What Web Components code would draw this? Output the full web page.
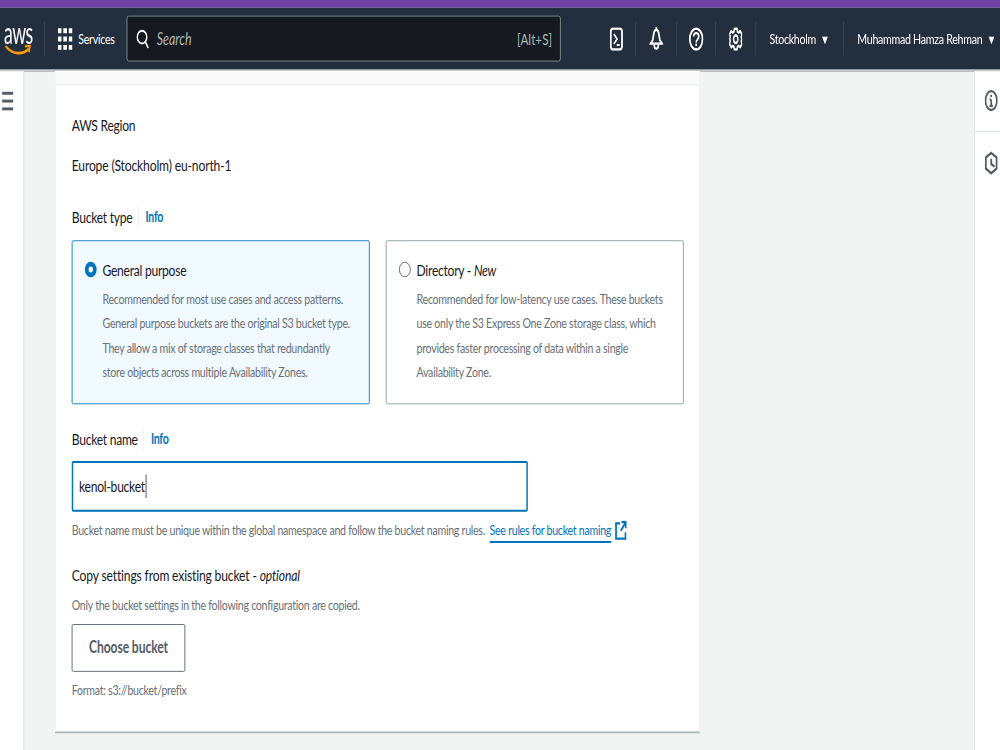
<!DOCTYPE html>
<html>
<head>
<meta charset="utf-8">
<title>Create bucket</title>
<style>
  html, body { margin:0; padding:0; height:100%; overflow:hidden; background:#f2f3f3; }
</style>
</head>
<body>
<s3-console>
  <top-nav slot="nav"></top-nav>
  <side-rail slot="left"></side-rail>
  <general-config slot="main"></general-config>
  <tools-rail slot="right"></tools-rail>
</s3-console>

<script>
// the reference is a 1366x768 page squeezed into 1000x750, so lay out at
// the real size and squeeze the stage once
class S3Console extends HTMLElement {
  constructor() {
	super();
	this.attachShadow({ mode: "open" }).innerHTML = `
	  <style>
		:host {
		  display:block; width:1000px; height:750px; overflow:hidden;
		  font:14.5px/20px Lato, "Noto Sans", sans-serif; color:#16191f; background:#f2f3f3;
		  --ls-s:-.37px; --ls-l:-.35px;
		}
		.stage { width:1366px; height:768px; overflow:hidden; transform-origin:0 0; transform:scale(.73206,.97656); }
		.strip { height:8px; background:#6f42a5; }
		.body { display:flex; height:695px; }
		.mid { flex:1; padding-left:42px; padding-right:375px; min-width:0; }
	  </style>
	  <div class="stage">
		<div class="strip"></div>
		<slot name="nav"></slot>
		<div class="body">
		  <slot name="left"></slot>
		  <div class="mid"><slot name="main"></slot></div>
		  <slot name="right"></slot>
		</div>
	  </div>`;
  }
}

class TopNav extends HTMLElement {
  constructor() {
	super();
	this.attachShadow({ mode: "open" }).innerHTML = `
	  <style>
		:host {
		  display:flex; align-items:center; height:65px; box-sizing:border-box;
		  background:#232f3e; color:#fff; border-bottom:2px solid #c9cdd1;
		  font-size:14.5px; letter-spacing:var(--ls-s);
		}
		.logo { width:36px; margin-left:7px; display:flex; flex-direction:column; align-items:center; flex:none; }
		.logo b { display:block; font:400 31px/22px Lato, sans-serif; letter-spacing:-1px; transform:scaleX(.78); }
		.logo svg { display:block; margin-top:2px; }
		.sep { width:1px; height:35px; background:#3d4856; flex:none; }
		.services { display:flex; align-items:center; gap:8px; width:77px; margin-left:18px; flex:none; white-space:nowrap; }
		.services svg { flex:none; }
		.search {
		  width:593px; height:47px; box-sizing:border-box; margin-left:17px; flex:none;
		  display:flex; align-items:center; padding:0 11px 0 12px;
		  background:#16191f; border:1px solid #879596; border-radius:3px; color:#aab7b8;
		  letter-spacing:0;
		}
		.search svg { flex:none; }
		.search em { margin-left:10px; font-size:17px; flex:1; }
		.search span { font-size:16px; }
		.ico { display:flex; justify-content:center; flex:none; }
		.region { width:101px; padding-left:18px; flex:none; white-space:nowrap; }
		.user { padding-left:18px; white-space:nowrap; flex:none; }
		.caret { font-size:13px; margin-left:6px; letter-spacing:0; }
	  </style>
	  <div class="logo">
		<b>aws</b>
		<svg width="36" height="11" viewBox="0 0 36 11"><path d="M1.500 2c8 7.500 22 8.500 30 2.500" fill="none" stroke="#f90" stroke-width="2.800" stroke-linecap="round"/><path d="M27 1.500l7-.5-1.500 6.500" fill="none" stroke="#f90" stroke-width="2.200"/></svg>
	  </div>
	  <div class="sep" style="margin-left:17px"></div>
	  <div class="services">
		<svg width="20" height="24" viewBox="0 0 20 24" fill="#fff"><path d="M0 1h5v5H0zM7.500 1h5v5h-5zM15 1h5v5h-5zM0 9.500h5v5H0zM7.500 9.500h5v5h-5zM15 9.500h5v5h-5zM0 18h5v5H0zM7.500 18h5v5h-5zM15 18h5v5h-5z"/></svg>
		<span>Services</span>
	  </div>
	  <div class="search">
		<svg width="18" height="20" viewBox="0 0 18 20" fill="none" stroke="#fff" stroke-width="2"><circle cx="8" cy="8" r="6.500"/><path d="M12.500 13l4 6"/></svg>
		<em>Search</em>
		<span>[Alt+S]</span>
	  </div>
	  <div class="ico" style="margin-left:50px;width:52px"><svg width="18" height="24" viewBox="0 0 18 24" fill="none" stroke="#fff" stroke-width="2.500"><rect x="1.300" y="1.300" width="15.400" height="21.400" rx="3"/><path d="M5.500 7l4.500 5-4.500 5M9.500 18h4" stroke-width="2"/></svg></div>
	  <div class="sep"></div>
	  <div class="ico" style="width:55px"><svg width="19" height="26" viewBox="0 0 20 27" fill="none" stroke="#fff" stroke-width="2.500"><path d="M10 .5v3M10 3.500c-2.200 0-3.200 1.500-3.600 4L5 14c-.5 2-2 3-3.500 4.500h17C17 17 15.500 16 15 14l-1.400-6.500c-.4-2.500-1.400-4-3.600-4z"/><path d="M7 19c0 6.500 6 6.500 6 0"/></svg></div>
	  <div class="sep"></div>
	  <div class="ico" style="width:52px"><svg width="20" height="24" viewBox="0 0 20 24" fill="none" stroke="#fff" stroke-width="2.500"><ellipse cx="10" cy="12" rx="8.700" ry="10.700"/><path d="M6.500 9.500c0-5 7-5 7 0 0 3-3.500 3-3.500 6" stroke-width="2.200"/><path d="M10 16.500v2.500" stroke-width="2.200"/></svg></div>
	  <div class="sep"></div>
	  <div class="ico" style="width:54px"><svg width="18" height="24" viewBox="0 0 24 24" preserveAspectRatio="none" fill="none" stroke="#fff" stroke-width="2.600"><path d="M9.600 1.500h4.800l.7 2.800 2.500 1 2.500-1.500 3.400 3.400-1.500 2.500 1 2.300-1 2.500 1.500 2.500-3.400 3.400-2.500-1.500-2.500 1-.7 2.800H9.600l-.7-2.800-2.500-1-2.500 1.500L.5 16.700 2 14.200l-1-2.200 1-2.500L.5 7.200l3.400-3.400 2.500 1.500 2.500-1z"/><circle cx="12" cy="12" r="4"/></svg></div>
	  <div class="sep"></div>
	  <div class="region">Stockholm<span class="caret">▼</span></div>
	  <div class="sep"></div>
	  <div class="user">Muhammad Hamza Rehman<span class="caret">▼</span></div>`;
  }
}

class SideRail extends HTMLElement {
  constructor() {
	super();
	this.attachShadow({ mode: "open" }).innerHTML = `
	  <style>
		:host {
		  display:block; width:33px; flex:none; box-sizing:border-box;
		  background:#fff; border-right:1px solid #d5dbdb; padding:21px 0 0 3px;
		}
		i { display:block; width:15px; height:3px; background:#545b64; margin-bottom:5px; }
	  </style>
	  <i></i><i></i><i></i>`;
  }
}

class ToolsRail extends HTMLElement {
  constructor() {
	super();
	this.attachShadow({ mode: "open" }).innerHTML = `
	  <style>
		:host {
		  display:block; width:35px; flex:none; box-sizing:border-box;
		  background:#fff; border-left:1px solid #d5dbdb;
		}
		.top { height:62px; box-sizing:border-box; border-bottom:1px solid #d5dbdb; padding:18px 0 0 13px; }
		.low { padding:19px 0 0 13px; }
		svg { display:block; }
	  </style>
	  <div class="top">
		<svg width="18" height="24" viewBox="0 0 20 24" fill="none" stroke="#545b64" stroke-width="2.600"><ellipse cx="10" cy="12" rx="8.700" ry="10.700"/><path d="M10 11v7M7.500 18h5M7.500 11H10M10 5.500V8" stroke-width="2.600"/></svg>
	  </div>
	  <div class="low">
		<svg width="18" height="26" viewBox="0 0 20 26" fill="none" stroke="#545b64" stroke-width="2.800"><path d="M10 1.500l8.200 5.200v12.600L10 24.500l-8.200-5.200V6.700z"/><path d="M10 8v6l5 3"/></svg>
	  </div>`;
  }
}

class FieldLabel extends HTMLElement {
  constructor() {
	super();
	this.attachShadow({ mode: "open" }).innerHTML = `
	  <style>
		:host { display:flex; align-items:center; font-size:16.5px; line-height:22px; color:#16191f; letter-spacing:var(--ls-l); }
		a { margin-left:8px; padding-left:9px; border-left:1px solid #eaeded; color:#0073bb; font-size:14.5px; font-weight:700; text-decoration:none; letter-spacing:var(--ls-s); }
	  </style>
	  <slot></slot><a href="#">Info</a>`;
  }
}

class BucketTile extends HTMLElement {
  constructor() {
	super();
	this.attachShadow({ mode: "open" }).innerHTML = `
	  <style>
		:host {
		  display:flex; gap:8px; box-sizing:border-box; width:407px; height:168px; flex:none;
		  padding:18px 10px 0 17px; border:1px solid #879596; border-radius:2px; background:#fff;
		}
		:host([selected]) { background:#f1faff; border-color:#0073bb; }
		.radio {
		  width:16px; height:16px; box-sizing:border-box; margin-top:3px; flex:none;
		  border:1px solid #545b64; border-radius:50%; background:#fff;
		}
		:host([selected]) .radio { border:5px solid #0073bb; }
		.title { font-size:16.5px; line-height:24px; letter-spacing:var(--ls-l); }
		.desc { font-size:14.5px; line-height:25px; color:#687078; white-space:nowrap; margin-top:4px; letter-spacing:var(--ls-s); }
	  </style>
	  <div class="radio"></div>
	  <div>
		<div class="title"><slot name="title"></slot></div>
		<div class="desc"><slot></slot></div>
	  </div>`;
  }
}

class GeneralConfig extends HTMLElement {
  constructor() {
	super();
	this.attachShadow({ mode: "open" }).innerHTML = `
	  <style>
		:host {
		  display:block; height:678px; box-sizing:border-box; position:relative;
		  background:#fff; border:1px solid #eaeded; border-top:0; border-bottom:2px solid #aab7b8;
		}
		.stub { height:13px; background:#fafafa; border-bottom:1px solid #eaeded; }
		.pad { padding:30px 0 0 22px; }
		.plain { font-size:16.5px; line-height:22px; letter-spacing:var(--ls-l); }
		.wide { letter-spacing:-.2px; }
		.tiles { display:flex; gap:22px; width:836px; margin-top:13px; }
		.input {
		  width:623px; height:52px; box-sizing:border-box; margin-top:11px;
		  display:flex; align-items:center; padding:0 8px;
		  border:2px solid #0073bb; border-radius:2px; font-size:16.5px; letter-spacing:var(--ls-l);
		}
		.input i { display:block; width:1px; height:24px; background:#16191f; margin-left:1px; }
		.help { font-size:14.5px; line-height:20px; color:#687078; white-space:nowrap; letter-spacing:var(--ls-s); }
		.help a { color:#0073bb; text-decoration:none; border-bottom:2px solid #0073bb; padding-bottom:3px; margin-left:3px; }
		.help svg { vertical-align:-5px; margin-left:5px; }
		button {
		  display:block; width:155px; height:49px; box-sizing:border-box; margin-top:9px; padding:0 0 2px;
		  background:#fff; border:1px solid #545b64; border-radius:2px; color:#545b64;
		  font:700 16.5px/20px Lato, sans-serif; letter-spacing:-.1px;
		}
		em { font-style:italic; }
	  </style>
	  <div class="stub"></div>
	  <div class="pad">
		<div class="plain">AWS Region</div>
		<div class="plain wide" style="margin-top:19px">Europe (Stockholm) eu-north-1</div>
		<field-label style="margin-top:31px">Bucket type</field-label>
		<div class="tiles">
		  <bucket-tile selected>
			<span slot="title">General purpose</span>
			Recommended for most use cases and access patterns.<br>
			General purpose buckets are the original S3 bucket type.<br>
			They allow a mix of storage classes that redundantly<br>
			store objects across multiple Availability Zones.
		  </bucket-tile>
		  <bucket-tile>
			<span slot="title">Directory - <em>New</em></span>
			Recommended for low-latency use cases. These buckets<br>
			use only the S3 Express One Zone storage class, which<br>
			provides faster processing of data within a single<br>
			Availability Zone.
		  </bucket-tile>
		</div>
		<field-label style="margin-top:25px">Bucket name</field-label>
		<div class="input">kenol-bucket<i></i></div>
		<div class="help" style="margin-top:9px">Bucket name must be unique within the global namespace and follow the bucket naming rules. <a href="#">See rules for bucket naming</a><svg width="16" height="20" viewBox="0 0 16 20" fill="none" stroke="#0073bb" stroke-width="2.400"><path d="M7 3H1.500v15.500h13V12M9 1.500h6V8M15 1.500l-7 9"/></svg></div>
		<div class="plain wide" style="margin-top:25px">Copy settings from existing bucket - <em>optional</em></div>
		<div class="help" style="margin-top:10px">Only the bucket settings in the following configuration are copied.</div>
		<button>Choose bucket</button>
		<div class="help" style="margin-top:9px">Format: s3://bucket/prefix</div>
	  </div>`;
  }
}

customElements.define("s3-console", S3Console);
customElements.define("top-nav", TopNav);
customElements.define("side-rail", SideRail);
customElements.define("tools-rail", ToolsRail);
customElements.define("field-label", FieldLabel);
customElements.define("bucket-tile", BucketTile);
customElements.define("general-config", GeneralConfig);
</script>
</body>
</html>
